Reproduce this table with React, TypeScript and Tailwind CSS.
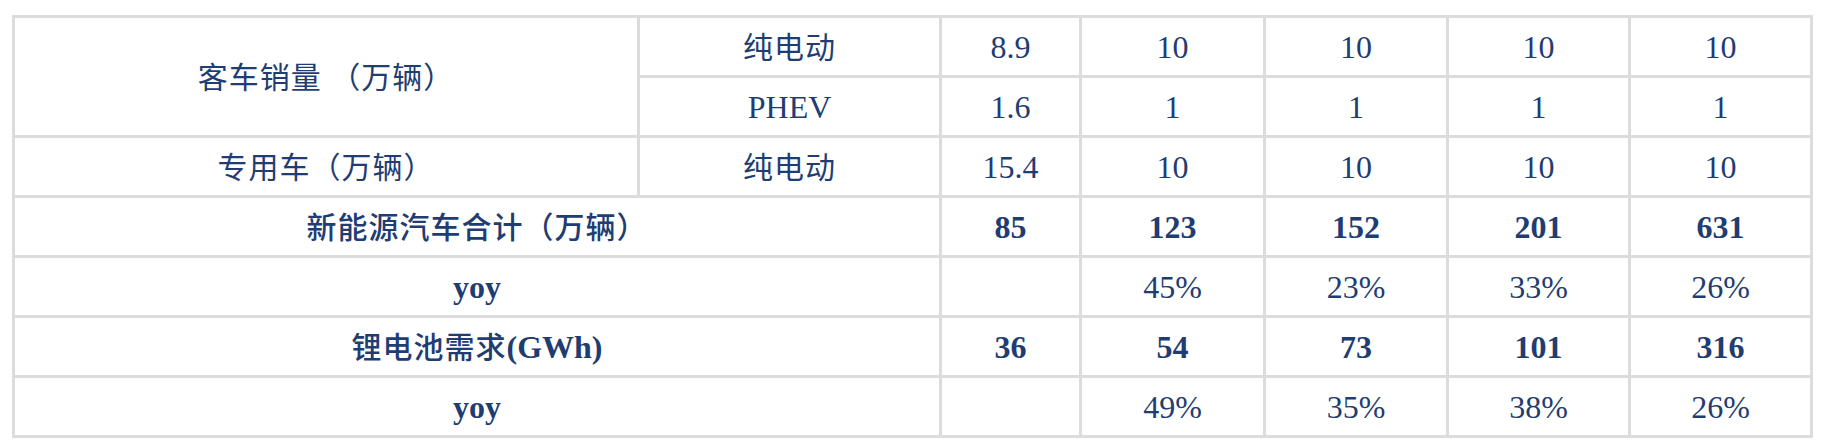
import React from "react";

type Row = {
  label?: string;
  labelSpan?: number;
  labelRows?: number;
  sub?: string;
  values: string[];
  bold?: boolean;
};

const rows: Row[] = [
  { label: "客车销量 （万辆）", labelRows: 2, sub: "纯电动", values: ["8.9", "10", "10", "10", "10"] },
  { sub: "PHEV", values: ["1.6", "1", "1", "1", "1"] },
  { label: "专用车（万辆）", sub: "纯电动", values: ["15.4", "10", "10", "10", "10"] },
  { label: "新能源汽车合计（万辆）", labelSpan: 2, values: ["85", "123", "152", "201", "631"], bold: true },
  { label: "yoy", labelSpan: 2, values: ["", "45%", "23%", "33%", "26%"], bold: true },
  { label: "锂电池需求(GWh)", labelSpan: 2, values: ["36", "54", "73", "101", "316"], bold: true },
  { label: "yoy", labelSpan: 2, values: ["", "49%", "35%", "38%", "26%"], bold: true },
];

const cell = "border-[3px] border-[#dcdcdc] text-center align-middle p-0";

const isYoy = (r: Row) => r.label === "yoy";

// chinese runs get a slightly smaller size than the latin/number runs
const Mixed = ({ text, bold }: { text: string; bold?: boolean }) => {
  const parts = text.split(/([\u3000-\u9fff\uff00-\uffef ]+)/).filter(Boolean);
  return (
    <>
      {parts.map((p, i) =>
        /[\u3000-\u9fff\uff00-\uffef]/.test(p) ? (
          <span key={i} className={`text-[30px] tracking-[1px] ${bold ? "font-medium" : ""}`}>
            {p}
          </span>
        ) : (
          <span key={i} className={bold ? "font-bold" : ""}>{p}</span>
        )
      )}
    </>
  );
};

export default function App() {
  return (
    <div className="w-[1822px] h-[448px] bg-white pt-[15px] pl-[12px]">
      <table
        className="table-fixed border-collapse w-[1798px] text-[#1f3d72] text-[32px] leading-none"
        style={{ fontFamily: '"Liberation Serif", "Noto Sans CJK SC", serif' }}
      >
        <colgroup>
          <col className="w-[625px]" />
          <col className="w-[302px]" />
          <col className="w-[140px]" />
          <col className="w-[184px]" />
          <col className="w-[183px]" />
          <col className="w-[182px]" />
          <col className="w-[182px]" />
        </colgroup>
        <tbody>
          {rows.map((r, i) => (
            <tr key={i} className="h-[60px]">
              {r.label !== undefined && (
                <td className={cell} colSpan={r.labelSpan ?? 1} rowSpan={r.labelRows ?? 1}>
                  <Mixed text={r.label} bold={r.bold} />
                </td>
              )}
              {r.sub !== undefined && (
                <td className={cell}>
                  <Mixed text={r.sub} />
                </td>
              )}
              {r.values.map((v, j) => (
                <td key={j} className={`${cell} ${r.bold && !isYoy(r) ? "font-bold" : ""}`}>
                  {v}
                </td>
              ))}
            </tr>
          ))}
        </tbody>
      </table>
    </div>
  );
}
